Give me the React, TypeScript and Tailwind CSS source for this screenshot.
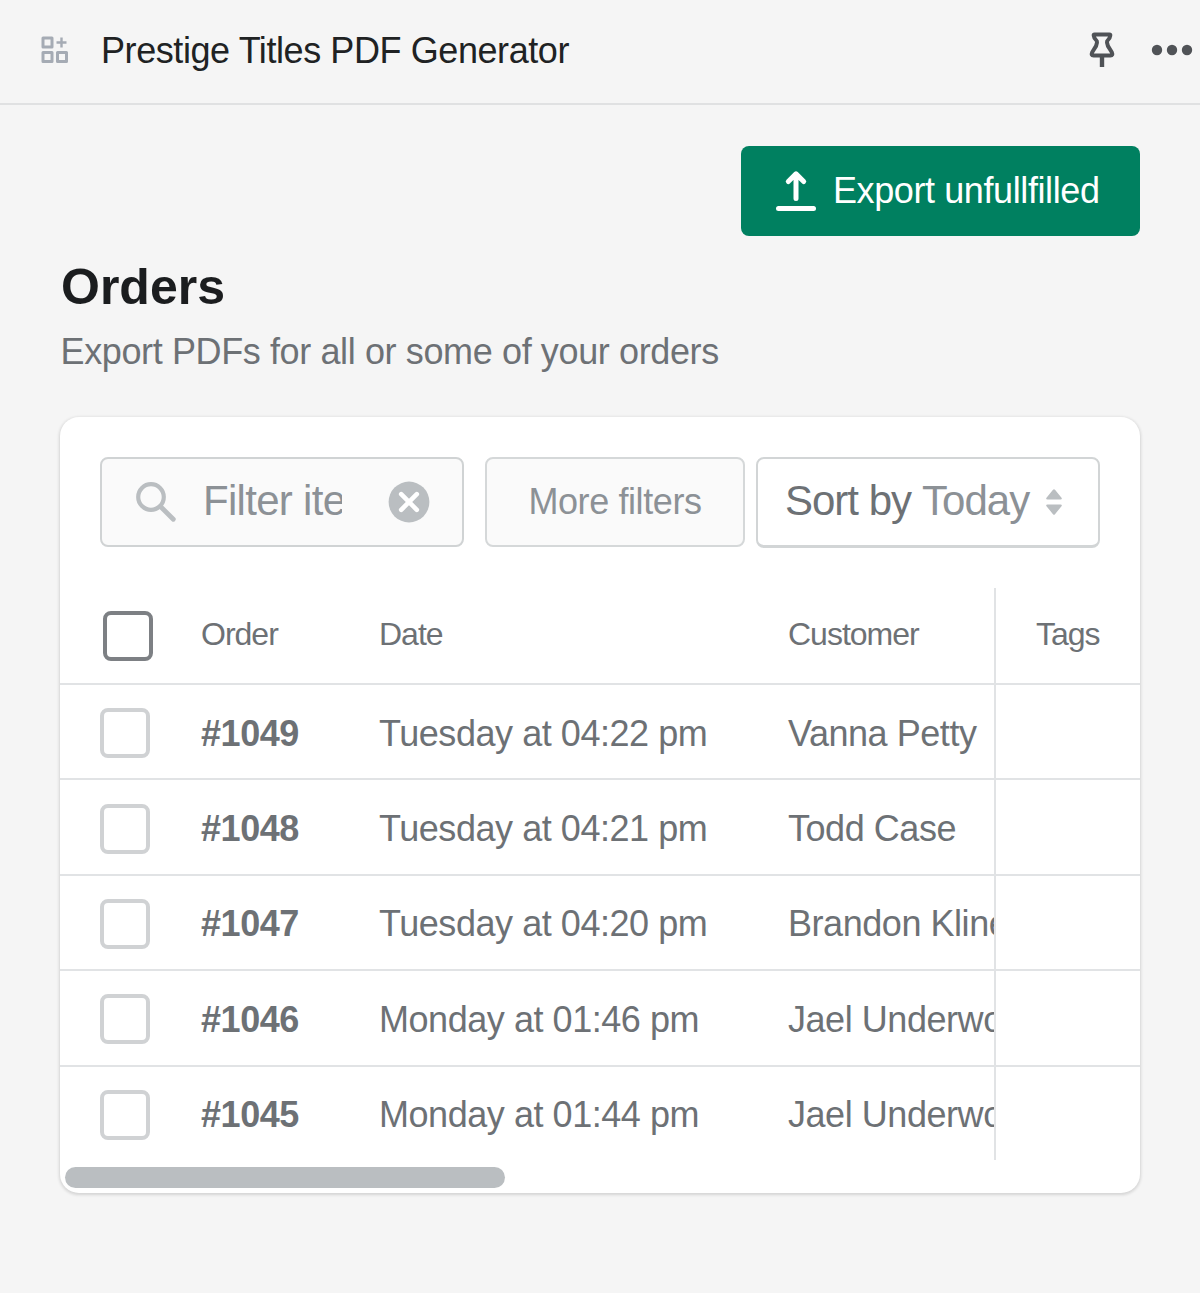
import React from "react";

const orders = [
  { id: "#1049", date: "Tuesday at 04:22 pm", customer: "Vanna Petty" },
  { id: "#1048", date: "Tuesday at 04:21 pm", customer: "Todd Case" },
  { id: "#1047", date: "Tuesday at 04:20 pm", customer: "Brandon Kline" },
  { id: "#1046", date: "Monday at 01:46 pm", customer: "Jael Underwood" },
  { id: "#1045", date: "Monday at 01:44 pm", customer: "Jael Underwood" },
];

function AppsIcon() {
  return (
    <svg width="28" height="28" viewBox="0 0 28 28" fill="none" stroke="#a5abb4" strokeWidth="3" strokeLinejoin="round">
      <rect x="2" y="2" width="9" height="9" />
      <rect x="2" y="16.5" width="9" height="9" />
      <rect x="16.5" y="16.5" width="9" height="9" />
      <path d="M20.5 1.5v10M15.5 6.5h10" strokeWidth="2.4" />
    </svg>
  );
}

function PinIcon() {
  return (
    <svg width="26" height="36" viewBox="0 0 26 36" fill="none" stroke="#4f5256" strokeWidth="4" strokeLinejoin="round" strokeLinecap="round">
      <path d="M5.500 2.500h15q1 0 .8 1.100-.4 3-2.300 4.400-1.200 1-1 2.400.4 3.500 2.800 6.600l2 3.300q1.400 3.200-1.300 3.200h-17q-2.700 0-1.300-3.200l2-3.300Q7.600 13.900 8 10.400q.2-1.400-1-2.400-1.900-1.400-2.300-4.400-.2-1.100.8-1.100Z" />
      <path d="M13 24.500v10.500" strokeLinecap="butt" strokeWidth="4.400" />
    </svg>
  );
}

function DotsIcon() {
  return (
    <svg width="42" height="12" viewBox="0 0 42 12" fill="#505357">
      <circle cx="6" cy="6" r="5.200" />
      <circle cx="21" cy="6" r="5.200" />
      <circle cx="36" cy="6" r="5.200" />
    </svg>
  );
}

function ExportIcon() {
  return (
    <svg width="40" height="42" viewBox="0 0 40 42" fill="none" stroke="white" strokeWidth="5" strokeLinecap="round" strokeLinejoin="round">
      <path d="M20 28.500V5M12.300 11.500 20 3.900l7.700 7.600" />
      <path d="M2.500 38.500h35" />
    </svg>
  );
}

function SearchIcon() {
  return (
    <svg width="42" height="42" viewBox="0 0 42 42" fill="none" stroke="#babec1" strokeLinecap="round">
      <circle cx="16" cy="16" r="12.800" strokeWidth="4.200" />
      <path d="M25.500 25.500 38.300 38.300" strokeWidth="4.800" />
    </svg>
  );
}

function ClearIcon() {
  return (
    <svg width="42" height="42" viewBox="0 0 42 42">
      <circle cx="21" cy="21" r="20.400" fill="#babec1" />
      <path d="m13.200 13.200 15.600 15.600m0-15.600L13.200 28.800" stroke="white" strokeWidth="4.600" strokeLinecap="round" />
    </svg>
  );
}

function SortIcon() {
  return (
    <svg width="16" height="26" viewBox="0 0 16 26" fill="#babec1">
      <path d="M7 .8q1-1 2 0l6.500 8q1 1.700-1 1.700h-13q-2 0-1-1.700ZM7 25.200q1 1 2 0l6.500-8q1-1.700-1-1.700h-13q-2 0-1 1.700Z" />
    </svg>
  );
}

export default function App() {
  return (
    <div className="h-[1293px] w-[1200px] overflow-hidden bg-[#f5f5f5] font-['Liberation_Sans',Arial,sans-serif] text-[#6d7175]">
      <header className="flex h-[105px] items-center border-b-[2px] border-[#e0e1e2] pb-[3px] pl-[41px] pr-[7px]">
        <AppsIcon />
        <h1 className="ml-[32px] mt-[2px] grow whitespace-nowrap text-[36px] leading-[40px] tracking-[-0.42px] text-[#202223]">
          Prestige Titles PDF Generator
        </h1>
        <PinIcon />
        <span className="ml-[36px]">
          <DotsIcon />
        </span>
      </header>

      <main className="px-[60px] pt-[41px]">
        <div className="flex justify-end">
          <button className="flex h-[90px] w-[399px] items-center rounded-[8px] bg-[#008060] pl-[35px] text-[36px] tracking-[-0.4px] text-white">
            <ExportIcon />
            <span className="ml-[17px] whitespace-nowrap">Export unfullfilled</span>
          </button>
        </div>

        <h2 className="ml-[1px] mt-[23px] text-[50px] font-bold leading-[56px] text-[#1b1d1f]">Orders</h2>
        <p className="ml-[0.5px] mt-[15px] text-[36px] leading-[44px] tracking-[-0.38px]">Export PDFs for all or some of your orders</p>

        <section className="mt-[43px] h-[776px] overflow-hidden rounded-[19px] bg-white shadow-[0_1px_3px_1px_rgba(23,24,24,0.14)]">
          <div className="flex px-[40px] pt-[40px]">
            <div className="flex h-[90px] w-[364px] items-center rounded-[8px] border-[2px] border-[#d0d3d4] bg-[#fafafa] pl-[33px]">
              <SearchIcon />
              <span className="ml-[26px] mt-[-3px] w-[139px] overflow-hidden whitespace-nowrap text-[42px] leading-[50px] tracking-[-0.7px] text-[#8c9196]">
                Filter items
              </span>
              <span className="ml-[46px]">
                <ClearIcon />
              </span>
            </div>
            <button className="ml-[21px] flex h-[90px] w-[260px] items-center justify-center rounded-[8px] border-[2px] border-[#d5d8d9] bg-[#fafafa] text-[36px] tracking-[-0.4px] text-[#8c9196]">
              More filters
            </button>
            <div className="ml-[11px] flex h-[91px] w-[344px] items-center whitespace-nowrap rounded-[8px] border-[2px] border-b-[3px] border-[#d2d5d6] pl-[27px] text-[42px] tracking-[-1px]">
              <span className="mt-[-3px]">Sort by</span>
              <span className="ml-[11px] mt-[-3px] text-[#8c9196]">Today</span>
              <span className="ml-[17px]">
                <SortIcon />
              </span>
            </div>
          </div>

          <div className="mt-[40px]">
            <div className="flex h-[95px] text-[32px] tracking-[-1px]">
              <div className="flex w-[934px] items-center overflow-hidden whitespace-nowrap pl-[43px]">
                <span className="size-[50px] shrink-0 rounded-[8px] border-[4px] border-[#7d8084]" />
                <span className="ml-[48px] w-[178px] shrink-0 pb-[3px]">Order</span>
                <span className="w-[409px] shrink-0 pb-[3px]">Date</span>
                <span className="shrink-0 pb-[3px]">Customer</span>
              </div>
              <div className="flex grow items-center border-l-[2px] border-[#e1e3e5] pb-[3px] pl-[40px]">Tags</div>
            </div>
            {orders.map((order) => (
              <div key={order.id} className="flex h-[95.4px] border-t-[2px] border-[#e1e3e5] text-[36px] tracking-[-0.45px]">
                <div className="flex w-[934px] items-center overflow-hidden whitespace-nowrap pl-[40px] pt-[3px]">
                  <span className="size-[50px] shrink-0 rounded-[8px] border-[4px] border-[#d0d2d4]" />
                  <span className="ml-[51px] w-[178px] shrink-0 pt-[1px] font-bold">{order.id}</span>
                  <span className="w-[409px] shrink-0 pt-[1px]">{order.date}</span>
                  <span className="shrink-0 pt-[1px]">{order.customer}</span>
                </div>
                <div className="grow border-l-[2px] border-[#e1e3e5]" />
              </div>
            ))}
          </div>
          <div className="ml-[5px] mt-[7px] h-[21px] w-[440px] rounded-full bg-[#babec1]" />
        </section>
      </main>
    </div>
  );
}
